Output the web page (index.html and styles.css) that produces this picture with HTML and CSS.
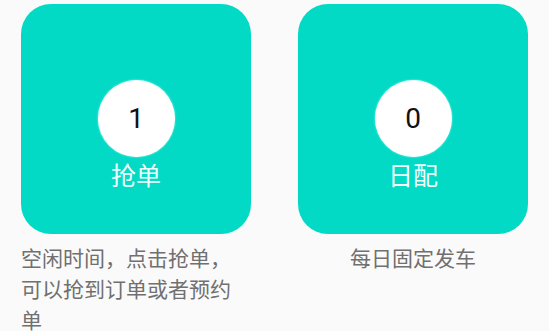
FILE: index.html
```html
<!DOCTYPE html>
<html lang="zh-CN">
<head>
    <meta charset="UTF-8">
    <meta name="viewport" content="width=device-width, initial-scale=1.0">
    <title>接单方式</title>
    <link rel="stylesheet" href="styles.css">
</head>
<body>

    <section class="modes">
        <div class="mode">
            <div class="mode-card">
                <div class="count">1</div>
                <div class="mode-name">抢单</div>
            </div>
            <p class="mode-desc">空闲时间，点击抢单，可以抢到订单或者预约单</p>
        </div>

        <div class="mode">
            <div class="mode-card">
                <div class="count">0</div>
                <div class="mode-name">日配</div>
            </div>
            <p class="mode-desc">每日固定发车</p>
        </div>
    </section>

</body>
</html>
```

FILE: styles.css
```css
body {
    margin: 0;
    padding: 0;
    background-color: #fafafa;
    font-family: Roboto, "Noto Sans CJK SC", sans-serif;
}

.modes {
    display: flex;
    gap: 47px;
    padding: 4px 20px 0 21px;
}

.mode {
    width: 230px;
    display: flex;
    flex-direction: column;
    align-items: center;
}

.mode-card {
    width: 230px;
    height: 230px;
    box-sizing: border-box;
    padding-top: 76px;
    background-color: #03dac5;
    border-radius: 30px;
    display: flex;
    flex-direction: column;
    align-items: center;
}

.count {
    width: 77px;
    height: 77px;
    border-radius: 50%;
    background-color: #fff;
    box-shadow: 0 0 2px rgba(180, 255, 250, 0.9);
    color: #111;
    font-size: 28px;
    line-height: 77px;
    text-align: center;
}

.mode-name {
    margin-top: 2px;
    color: #f2fffd;
    font-family: "Noto Sans CJK SC", sans-serif;
    font-size: 25px;
    line-height: 30px;
}

.mode-desc {
    margin: 8px 0 0;
    color: #707070;
    font-family: "Noto Sans CJK SC", sans-serif;
    font-size: 21px;
    line-height: 31px;
}
```
